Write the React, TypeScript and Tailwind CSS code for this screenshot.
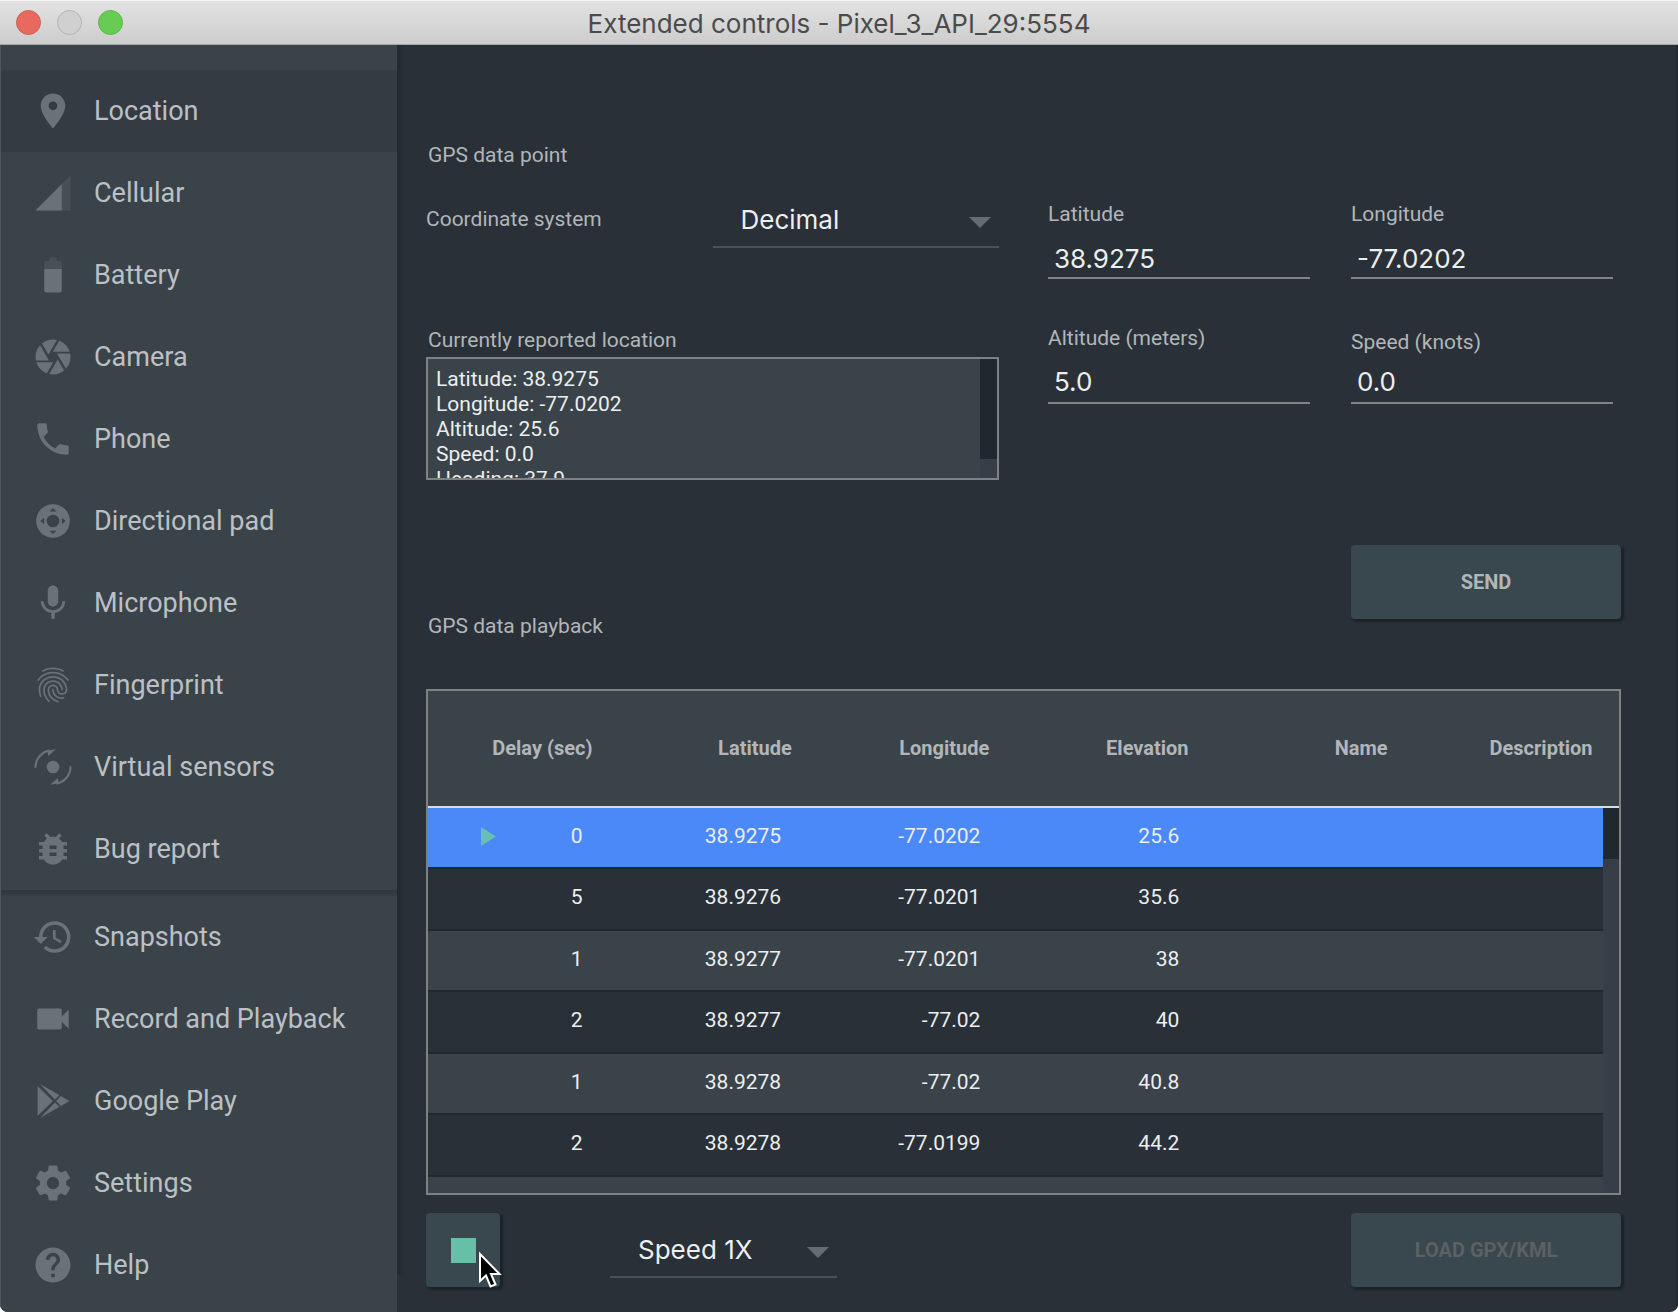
import type { ReactNode } from "react";
import { MdBugReport, MdCamera, MdFingerprint, MdHelp, MdHistory, MdLocationOn, MdPhone, MdVideocam } from "react-icons/md";

function Glyph({ children }: { children: ReactNode }) {
  return (
    <svg viewBox="0 0 24 24" fill="currentColor" className="size-full" aria-hidden="true">
      {children}
    </svg>
  );
}

const CellularIcon = () => (
  <Glyph>
    <path fillOpacity=".3" d="M2 22h20V2z" />
    <path d="M17 7L2 22h15z" />
  </Glyph>
);

const BatteryIcon = () => (
  <Glyph>
    <path fillOpacity=".3" d="M17 5.33C17 4.6 16.4 4 15.67 4H14V2h-4v2H8.33C7.6 4 7 4.6 7 5.33V8.500h10z" />
    <path d="M7 8.500v12.170C7 21.400 7.600 22 8.330 22h7.330c.740 0 1.340-.600 1.340-1.330V8.500z" />
  </Glyph>
);

const DpadIcon = () => (
  <Glyph>
    <path
      fillRule="evenodd"
      d="M12 2.400a9.600 9.600 0 1 0 0 19.200a9.600 9.600 0 1 0 0-19.200zM12 8.400a3.600 3.600 0 1 1 0 7.200a3.600 3.600 0 1 1 0-7.200zM12 4.600l1.900 1.900h-3.800zM12 19.400l1.900-1.900h-3.800zM4.800 12l2.100-1.900v3.800zM19.200 12l-2.100-1.900v3.800z"
    />
  </Glyph>
);

const MicIcon = () => (
  <Glyph>
    <path d="M12 14c1.660 0 2.990-1.340 2.990-3L15 5c0-1.660-1.340-3-3-3S9 3.340 9 5v6c0 1.660 1.340 3 3 3zm5.300-3c0 3-2.540 5.100-5.300 5.100S6.700 14 6.700 11H5c0 3.410 2.720 6.230 6 6.720V21h2v-3.280c3.280-.480 6-3.300 6-6.720h-1.700z" />
  </Glyph>
);

const SensorsIcon = () => (
  <Glyph>
    <circle cx="12" cy="12" r="3.600" />
    <path fill="none" stroke="currentColor" strokeWidth="1.200" d="M2 12.400A9.900 9.900 0 0 1 10 2.500M22 11.600A9.900 9.900 0 0 1 14 21.500" />
    <path d="M8.400 2.700L13.700 1.900L9.300 5.700L9.100 4.300zM15.600 21.300L10.300 22.100L14.700 18.300L14.900 19.700z" />
  </Glyph>
);

const PlayStoreIcon = () => (
  <Glyph>
    <path d="M3.200 3.400L11.900 12L3.200 20.600zM4.600 2.300L15.700 8.700L13.100 11.100zM4.600 21.700L15.700 15.300L13.100 12.900zM16.500 9.200L21.300 12L16.500 14.800L13.800 12z" />
  </Glyph>
);

const SettingsIcon = () => (
  <Glyph>
    <path d="M19.43 12.98c.04-.32.07-.64.07-.98s-.03-.66-.07-.98l2.11-1.65c.19-.15.24-.42.12-.64l-2-3.46c-.12-.22-.39-.3-.61-.22l-2.49 1c-.52-.4-1.08-.73-1.69-.98l-.38-2.65C14.46 2.18 14.25 2 14 2h-4c-.25 0-.46.18-.49.42l-.38 2.65c-.61.25-1.17.59-1.69.98l-2.49-1c-.23-.09-.49 0-.61.22l-2 3.46c-.13.22-.07.49.12.64l2.11 1.65c-.04.32-.07.65-.07.98s.03.66.07.98l-2.11 1.65c-.19.15-.24.42-.12.64l2 3.46c.12.22.39.3.61.22l2.49-1c.52.4 1.08.73 1.69.98l.38 2.65c.03.24.24.42.49.42h4c.25 0 .46-.18.49-.42l.38-2.65c.61-.25 1.17-.59 1.69-.98l2.49 1c.23.09.49 0 .61-.22l2-3.46c.12-.22.07-.49-.12-.64l-2.11-1.65zM12 15.5c-1.93 0-3.5-1.57-3.5-3.5s1.57-3.5 3.5-3.5 3.5 1.57 3.5 3.5-1.57 3.5-3.5 3.5z" />
  </Glyph>
);

type Item = { label: string; icon: ReactNode };

const primaryItems: Item[] = [
  { label: "Location", icon: <MdLocationOn className="size-full" /> },
  { label: "Cellular", icon: <CellularIcon /> },
  { label: "Battery", icon: <BatteryIcon /> },
  { label: "Camera", icon: <MdCamera className="size-full" /> },
  { label: "Phone", icon: <MdPhone className="size-full" /> },
  { label: "Directional pad", icon: <DpadIcon /> },
  { label: "Microphone", icon: <MicIcon /> },
  { label: "Fingerprint", icon: <MdFingerprint className="size-full" /> },
  { label: "Virtual sensors", icon: <SensorsIcon /> },
  { label: "Bug report", icon: <MdBugReport className="size-full" /> },
];

const secondaryItems: Item[] = [
  { label: "Snapshots", icon: <MdHistory className="size-full" /> },
  { label: "Record and Playback", icon: <MdVideocam className="size-full" /> },
  { label: "Google Play", icon: <PlayStoreIcon /> },
  { label: "Settings", icon: <SettingsIcon /> },
  { label: "Help", icon: <MdHelp className="size-full" /> },
];

const rows = [
  ["0", "38.9275", "-77.0202", "25.6"],
  ["5", "38.9276", "-77.0201", "35.6"],
  ["1", "38.9277", "-77.0201", "38"],
  ["2", "38.9277", "-77.02", "40"],
  ["1", "38.9278", "-77.02", "40.8"],
  ["2", "38.9278", "-77.0199", "44.2"],
  ["", "", "", ""],
];

const report = "Latitude: 38.9275\nLongitude: -77.0202\nAltitude: 25.6\nSpeed: 0.0\nHeading: 37.9";

function NavItem({ item, active }: { item: Item; active?: boolean }) {
  return (
    <button
      type="button"
      aria-current={active ? "page" : undefined}
      className={`flex h-[82px] w-full items-center gap-5 pl-[31px] text-left text-[27px] text-[#bcc0c4] ${active ? "bg-[#343b43]" : ""}`}
    >
      <span className="size-[42px] shrink-0 text-[#697278]">{item.icon}</span>
      {item.label}
    </button>
  );
}

function DropDown({ id, label, value, className }: { id: string; label: string; value: string; className: string }) {
  return (
    <div className={`relative ${className}`}>
      <select
        id={id}
        aria-label={label}
        className="h-14 w-full appearance-none border-b-2 border-[#4a5157] bg-transparent pt-px pl-7 font-[Inter,sans-serif] text-[26px] text-[#eceeef] outline-none"
      >
        <option>{value}</option>
      </select>
      <svg viewBox="0 0 22 11" className="pointer-events-none absolute top-[25px] right-2 h-[11px] w-[22px] fill-[#656d73]" aria-hidden="true">
        <path d="M0 0h22L11 11z" />
      </svg>
    </div>
  );
}

type FieldProps = { id: string; label: string; value: string; gap: string; height: string; className?: string };

function Field({ id, label, value, gap, height, className }: FieldProps) {
  return (
    <div className={`flex flex-col ${gap} ${className ?? ""}`}>
      <label htmlFor={id} className="h-6 leading-6">
        {label}
      </label>
      <input
        id={id}
        defaultValue={value}
        className={`${height} w-full border-b-2 border-[#808283] bg-transparent pl-[6px] font-[Inter,sans-serif] text-[26px] text-[#eceeef] outline-none`}
      />
    </div>
  );
}

const raised = "h-[74px] rounded bg-[#39474e] text-[20px] font-bold shadow-[2px_2px_2px_1px_#1c2226]";

export default function App() {
  return (
    <div className="flex min-h-screen flex-col overflow-hidden rounded-b-lg bg-[#293037] font-[Roboto,sans-serif] text-[21px] text-[#b2b6b9]">
      <header className="grid h-[45px] grid-cols-[1fr_auto_1fr] items-center border-t border-b border-t-[#f4f4f4] border-b-[#a4a6a8] bg-linear-to-b from-[#e2e2e2] to-[#cdcdcd] px-4">
        <div className="flex gap-4">
          <button type="button" aria-label="Close" className="size-[25px] rounded-full border border-[#cf5f56] bg-[#e8695f]" />
          <button type="button" aria-label="Minimize" className="size-[25px] rounded-full border border-[#b4b4b4] bg-[#d0d0d0]" />
          <button type="button" aria-label="Zoom" className="size-[25px] rounded-full border border-[#5bb549] bg-[#67cb54]" />
        </div>
        <h1 className="pt-[2px] font-[Inter,sans-serif] text-[26px] leading-8 text-[#4b4b4b]">Extended controls - Pixel_3_API_29:5554</h1>
      </header>

      <div className="flex flex-1">
        <nav className="w-[397px] shrink-0 border-l border-[#4c565b] bg-[#394349] pt-[25px]">
          {primaryItems.map((item, i) => (
            <NavItem key={item.label} item={item} active={i === 0} />
          ))}
          <div className="h-[6px] bg-linear-to-b from-[#2e373d] to-[#354046]" />
          {secondaryItems.map((item) => (
            <NavItem key={item.label} item={item} />
          ))}
        </nav>

        <div className="mb-[37px] w-2 shrink-0 bg-linear-to-r from-[#1f292f] to-[#28313a]" />

        <main className="min-w-0 flex-1 border-r-2 border-[#1f292f] pt-[98px] pr-[55px] pb-[25px] pl-[21px]">
          <h2 className="h-6 pl-[2px] leading-6">GPS data point</h2>

          <div className="mt-[25px] grid grid-cols-2 gap-[49px]">
            <div className="flex flex-col">
              <div className="flex items-center justify-between">
                <label htmlFor="coords">Coordinate system</label>
                <DropDown id="coords" label="Coordinate system" value="Decimal" className="w-1/2" />
              </div>
              <label htmlFor="report" className="mt-20 h-6 pl-[2px] leading-6">
                Currently reported location
              </label>
              <div className="relative mt-[5px] h-[123px] border-2 border-[#7f8282] bg-[#394349]">
                <textarea
                  id="report"
                  readOnly
                  defaultValue={report}
                  className="block size-full resize-none overflow-hidden bg-transparent pt-2 pl-2 leading-[25px] text-[#eceeef] outline-none"
                />
                <div className="absolute inset-y-0 right-0 w-[17px] bg-[#383e47]">
                  <div className="h-[100px] bg-[#1e282e]" />
                </div>
              </div>
              <h2 className="mt-[134px] h-6 pl-[2px] leading-6">GPS data playback</h2>
            </div>

            <div className="grid grid-cols-[262fr_270fr] content-start items-end gap-x-[41px] pt-[10px]">
              <Field id="lat" label="Latitude" value="38.9275" gap="gap-[13px]" height="h-10" />
              <Field id="lon" label="Longitude" value="-77.0202" gap="gap-[13px]" height="h-10" className="mr-2" />
              <Field id="alt" label="Altitude (meters)" value="5.0" gap="gap-[10px]" height="h-11" className="mt-[47px]" />
              <Field id="speed" label="Speed (knots)" value="0.0" gap="gap-[6px]" height="h-11" className="mr-2" />
              <button type="button" className={`${raised} col-start-2 mt-[141px] text-[#b2b6b9]`}>
                SEND
              </button>
            </div>
          </div>

          <div className="relative mt-[51px] h-[506px] overflow-hidden border-2 border-[#7f8282]">
            <table className="w-full table-fixed border-separate border-spacing-0">
              <colgroup>
                <col className="w-[19.2%]" />
                <col className="w-[16.5%]" />
                <col className="w-[15.3%]" />
                <col className="w-[18.8%]" />
                <col className="w-[17.1%]" />
                <col className="w-[13.1%]" />
              </colgroup>
              <thead>
                <tr className="h-[117px] bg-[#394349] text-[20px]">
                  {["Delay (sec)", "Latitude", "Longitude", "Elevation", "Name", "Description"].map((h) => (
                    <th key={h} className="border-b-2 border-[#d9dde2] p-0 pb-[2px]">
                      {h}
                    </th>
                  ))}
                </tr>
              </thead>
              <tbody className="text-right text-[#eceeef]">
                {rows.map((r, i) => (
                  <tr
                    key={i}
                    className={`even:h-[62px] odd:h-[61px] ${i === 0 ? "bg-[#4a89f7]" : i % 2 ? "bg-[#293037]" : "bg-[#394349]"}`}
                  >
                    <td className="border-b-2 border-[#1f292f] p-0 pb-[2px]">
                      <div className="flex items-center justify-between pr-[74px] pl-[53px]">
                        <span>
                          {i === 0 && (
                            <svg viewBox="0 0 15 19" className="h-[19px] w-[15px] fill-[#67c0b8]" aria-label="Current point">
                              <path d="M0 0L15 9.500L0 19z" />
                            </svg>
                          )}
                        </span>
                        {r[0]}
                      </div>
                    </td>
                    <td className="border-b-2 border-[#1f292f] p-0 pr-[72px] pb-[2px]">{r[1]}</td>
                    <td className="border-b-2 border-[#1f292f] p-0 pr-[55px] pb-[2px]">{r[2]}</td>
                    <td className="border-b-2 border-[#1f292f] p-0 pr-20 pb-[2px]">{r[3]}</td>
                    <td className="border-b-2 border-[#1f292f]" />
                    <td className="border-b-2 border-[#1f292f]" />
                  </tr>
                ))}
              </tbody>
            </table>
            <div className="absolute top-[117px] right-0 bottom-0 w-4 bg-[#373e47]">
              <div className="h-[51px] bg-[#1e282e]" />
            </div>
          </div>

          <div className="mt-[18px] flex items-center">
            <button type="button" aria-label="Stop" className={`${raised} relative flex w-[74px] items-center justify-center`}>
              <span className="size-[25px] bg-[#66bfa7]" />
              <svg viewBox="0 0 24 38" className="absolute top-[38px] left-[52px] h-[38px] w-6" aria-hidden="true">
                <path d="M2 3V30L8 24.500L12.500 35.500L17.500 33.500L13 23H21.500z" fill="#000" stroke="#fff" strokeWidth="2" />
              </svg>
            </button>
            <DropDown id="rate" label="Playback speed" value="Speed 1X" className="ml-[110px] w-[227px]" />
            <button type="button" disabled className={`${raised} ml-auto w-[270px] text-[#5c6163]`}>
              LOAD GPX/KML
            </button>
          </div>
        </main>
      </div>
    </div>
  );
}
